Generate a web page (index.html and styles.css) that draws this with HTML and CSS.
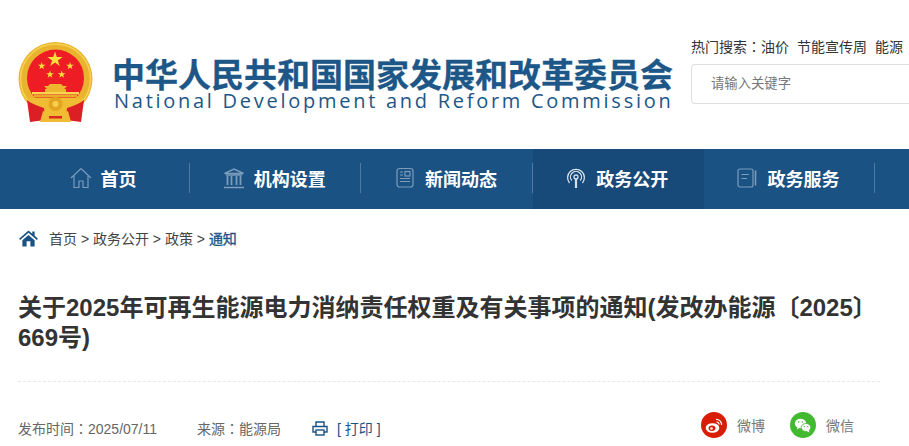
FILE: index.html
```html
<!DOCTYPE html>
<html lang="zh-CN">
<head>
<meta charset="utf-8">
<title>关于2025年可再生能源电力消纳责任权重及有关事项的通知</title>
<link rel="stylesheet" href="styles.css">
</head>
<body>
<header class="header">
  <svg class="emblem" viewBox="0 0 76 82" aria-hidden="true">
    <defs><path id="star" d="M0-1 .225-.309H.951L.363.118.588.809 0 .382-.588.809-.363.118-.951-.309H-.225Z" fill="#fbe03a"/></defs>
    <circle cx="37.5" cy="37" r="37" fill="#e9b32e"/>
    <circle cx="37.5" cy="37" r="35" fill="none" stroke="#f5d350" stroke-width="1.5"/>
    <circle cx="37.5" cy="36" r="28.5" fill="#ee1c25"/>
    <use href="#star" transform="translate(37 17.5) scale(8)"/>
    <use href="#star" transform="translate(23.7 24) scale(4)"/>
    <use href="#star" transform="translate(52 24) scale(4)"/>
    <use href="#star" transform="translate(32 32.5) scale(4)"/>
    <use href="#star" transform="translate(43.7 32.5) scale(4)"/>
    <path d="M27 51V47H29L26 44H30L32 42H43L45 44H49L46 47H48V51Z" fill="#eeb52e"/>
    <rect x="14" y="50" width="47" height="2.5" fill="#f8d650"/>
    <rect x="16" y="53" width="43" height="2.5" fill="#e8ac26"/>
    <path d="M10 56H65L60 66 50 78H25L15 66Z" fill="#efbc34"/>
    <circle cx="37.5" cy="62" r="7" fill="#e3a41f"/>
    <circle cx="37.5" cy="62" r="3" fill="#f6d04d"/>
    <path d="M9 58C14 62 20 64 26 66L27 78 12 80Z" fill="#dc1f24"/>
    <path d="M66 58C61 62 55 64 49 66L48 78 63 80Z" fill="#dc1f24"/>
    <path d="M25 69C30 72 45 72 50 69L53 80H22Z" fill="#efbc34"/>
    <rect x="31" y="74" width="13" height="2.5" fill="#d9291f"/>
  </svg>
  <div class="brand">
    <div class="brand-cn">中华人民共和国国家发展和改革委员会</div>
    <div class="brand-en">National Development and Reform Commission</div>
  </div>
  <div class="search-area">
    <div class="hot"><span>热门搜索<span class="colon" lang="zh-TW">：</span></span><span class="hot-item">油价</span><span class="hot-item">节能宣传周</span><span class="hot-item">能源</span></div>
    <div class="search-box">请输入关键字</div>
  </div>
</header>

<nav class="nav">
  <div class="nav-inner">
    <a class="nav-item">
      <svg class="nav-icon" viewBox="0 0 22 22" fill="none" stroke="#7b9cba" stroke-width="1.2"><path d="M1 11 11 1.5 21 11"/><path d="M4 9V20.5H9V14H13V20.5H18V9"/></svg>
      <span>首页</span>
    </a>
    <a class="nav-item">
      <svg class="nav-icon" viewBox="0 0 22 22" fill="none" stroke="#7b9cba" stroke-width="1.4"><path d="M1.5 6.5 11 2 20.5 6.5Z"/><path d="M4.5 9V18M8.5 9V18M13.5 9V18M17.5 9V18" stroke-width="1.8"/><path d="M1 20.5H21M3 8H19" stroke-width="1.5"/></svg>
      <span>机构设置</span>
    </a>
    <a class="nav-item">
      <svg class="nav-icon" viewBox="0 0 22 22" fill="none" stroke="#7b9cba" stroke-width="1.2"><rect x="3" y="1.5" width="16" height="18.5" rx="2.5"/><rect x="11" y="4.5" width="5" height="4.5"/><path d="M6 5H9M6 8H9M6 11.5H16M6 14.5H16"/></svg>
      <span>新闻动态</span>
    </a>
    <a class="nav-item nav-item-active">
      <svg class="nav-icon" viewBox="0 0 22 22" fill="none" stroke="#d6e0ea" stroke-width="1.3"><circle cx="11" cy="10" r="2"/><path d="M6.8 13.5A5.5 5.5 0 1 1 15.2 13.5"/><path d="M4.5 16A8.4 8.4 0 1 1 17.5 16"/><path d="M11 11V21" stroke-width="2.2"/></svg>
      <span>政务公开</span>
    </a>
    <a class="nav-item">
      <svg class="nav-icon" viewBox="0 0 22 22" fill="none" stroke="#7b9cba" stroke-width="1.2"><rect x="2" y="2" width="15" height="18" rx="2"/><path d="M19.5 3.5V18.5" stroke-width="1.6"/><path d="M5.5 7.5H13M5.5 11.5H11"/></svg>
      <span>政务服务</span>
    </a>
  </div>
</nav>

<main class="main">
  <div class="crumbs">
    <svg class="crumb-home" viewBox="0 0 20 18"><path d="M10 .5 0 9.2 1.2 10.6 10 3 18.8 10.6 20 9.2 16.5 6.2V1.5H14V4Z" fill="#1b5284"/><path d="M3.5 10.8 10 5.2 16.5 10.8V17.5H12V12H8V17.5H3.5Z" fill="#1b5284"/></svg>
    <span>首页 &gt; 政务公开 &gt; 政策 &gt; <b class="crumb-current">通知</b></span>
  </div>
  <h1 class="title">关于2025年可再生能源电力消纳责任权重及有关事项的通知(发改办能源〔2025〕669号)</h1>
  <div class="meta">
    <span class="meta-date">发布时间<span class="colon" lang="zh-TW">：</span>2025/07/11</span>
    <span class="meta-source">来源<span class="colon" lang="zh-TW">：</span>能源局</span>
    <span class="print">
      <svg class="print-icon" viewBox="0 0 16 15" fill="none" stroke="#1b5284" stroke-width="1.4"><path d="M4 5V1H12V5"/><path d="M4 11H1V5.5H15V11H12"/><rect x="4" y="9" width="8" height="5"/></svg>
      <span>[ 打印 ]</span>
    </span>
    <div class="share">
      <span class="share-item">
        <svg class="share-icon" viewBox="0 0 26 26"><circle cx="13" cy="13" r="13" fill="#d81e06"/><ellipse cx="11.5" cy="16" rx="6.8" ry="4.8" fill="#fff"/><ellipse cx="11" cy="16.3" rx="3.4" ry="2.7" fill="#d81e06"/><circle cx="10.5" cy="16.5" r="1.3" fill="#fff"/><path d="M15 7.5A5 5 0 0 1 20.5 13M15.5 10A2.5 2.5 0 0 1 18 12.5" fill="none" stroke="#fff" stroke-width="1.2"/></svg>
        <span>微博</span>
      </span>
      <span class="share-item">
        <svg class="share-icon" viewBox="0 0 26 26"><circle cx="13" cy="13" r="13" fill="#43b931"/><ellipse cx="10.5" cy="11.5" rx="5.7" ry="4.7" fill="#fff"/><path d="M7.5 14.5 7 17.5 10 15.5Z" fill="#fff"/><ellipse cx="16" cy="15.5" rx="4.8" ry="4" fill="#fff" stroke="#43b931" stroke-width=".8"/><path d="M18.5 18 19.5 20.5 16.5 19Z" fill="#fff"/><circle cx="8.6" cy="10" r=".8" fill="#43b931"/><circle cx="12.4" cy="10" r=".8" fill="#43b931"/><circle cx="14.4" cy="14.6" r=".7" fill="#43b931"/><circle cx="17.8" cy="14.6" r=".7" fill="#43b931"/></svg>
        <span>微信</span>
      </span>
    </div>
  </div>
</main>
</body>
</html>
```

FILE: styles.css
```css
* { box-sizing: border-box; }
html, body { margin: 0; padding: 0; height: 446px; overflow: hidden; background: #fff; }
body { font-family: "Liberation Sans", "Noto Sans CJK SC", sans-serif; color: #333; }

.colon { font-family: "Noto Sans CJK TC", sans-serif; }

.header { display: flex; align-items: flex-start; height: 149px; padding: 42px 0 0 18px; }
.emblem { width: 76px; height: 82px; flex: none; }
.brand { margin: 15px 0 0 18px; width: 562px; flex: none; color: #1d5788; }
.brand-cn { font: 700 33px/33px "Noto Sans CJK SC", sans-serif; white-space: nowrap; -webkit-text-stroke: .3px #1d5788; }
.brand-en { font: 400 20px/24px "Open Sans", sans-serif; letter-spacing: 2.73px; margin: -1px 0 0 2px; white-space: nowrap; }
.search-area { margin: -6px 0 0 17px; flex: none; width: 218px; }
.hot { font-size: 14px; line-height: 20px; color: #333; white-space: nowrap; }
.hot-item { margin-right: 8px; }
.hot-item:last-child { margin-right: 0; }
.search-box { margin-top: 7px; height: 40px; border: 1px solid #ddd; border-right: 0; border-radius: 4px 0 0 4px; padding-left: 19px; line-height: 37px; font-size: 13.33px; color: #777; }

.nav { height: 60px; background: #1b5284; padding-left: 19px; }
.nav-inner { display: flex; height: 60px; width: 856px; }
.nav-item { position: relative; flex: 1 1 0; display: flex; align-items: center; justify-content: center; gap: 9px; padding: 0 3px 2px 0; color: #fff; font: 700 18px/58px "Noto Sans CJK SC", sans-serif; }
.nav-item::after { content: ""; position: absolute; right: 0; top: 14px; height: 30px; width: 1px; background: #4f7ba2; }
.nav-item-active { background: #174a78; }
.nav-item-active::after { display: none; }
.nav-icon { width: 22px; height: 22px; flex: none; }

.main { padding: 0 29px 0 18px; }
.crumbs { display: flex; align-items: center; gap: 11px; height: 60px; padding: 0 0 2px 1px; font-size: 14px; color: #444; }
.crumb-home { width: 19px; height: 17px; flex: none; }
.crumb-current { font-weight: 400; color: #1b5284; -webkit-text-stroke: .3px #1b5284; }
.title { margin: 24px 0 0; font: 700 24px/30px "Liberation Sans", "Noto Sans CJK SC", sans-serif; color: #333; height: 89px; border-bottom: 1px dashed #e8e8e8; }
.meta { display: flex; align-items: center; margin-top: 16px; height: 60px; font-size: 14px; color: #666; }
.meta-date { width: 179px; }
.meta-source { width: 115px; }
.print { display: flex; align-items: center; gap: 9px; color: #1b5284; font-size: 14px; }
.print-icon { width: 16px; height: 15px; }
.share { margin: 0 26px 6px auto; display: flex; gap: 25px; }
.share-item { display: flex; align-items: center; gap: 10px; color: #777; }
.share-icon { width: 26px; height: 26px; }
```
